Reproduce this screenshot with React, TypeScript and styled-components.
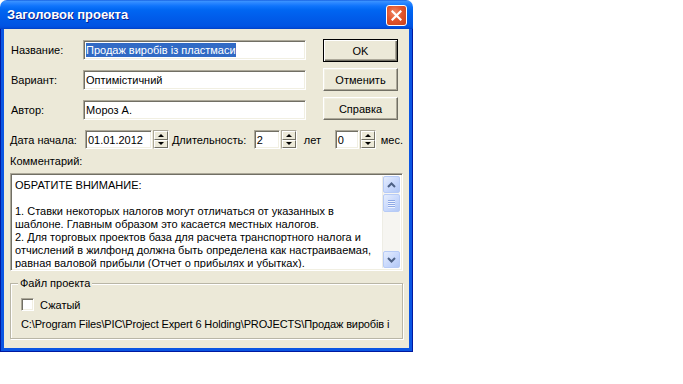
import React from 'react';
import styled, { createGlobalStyle, css } from 'styled-components';

const GlobalStyle = createGlobalStyle`
  html, body { margin: 0; padding: 0; background: #fff; }
  body {
    font-family: "Liberation Sans", Arial, sans-serif;
    font-size: 11px;
    color: #000;
  }
`;

const Window = styled.div`
  width: 413px;
  display: flex;
  flex-direction: column;
`;

const TitleBar = styled.div`
  height: 29px;
  box-sizing: border-box;
  padding: 0 6px 0 7px;
  border-radius: 7px 7px 0 0;
  display: flex;
  align-items: center;
  justify-content: space-between;
  background: linear-gradient(
    to bottom,
    #0a4fd8 0px,
    #3d95ff 1px,
    #2a86ff 3px,
    #0f74fc 6px,
    #0066f2 10px,
    #005eec 16px,
    #0058e6 22px,
    #0054e3 26px,
    #004ad8 28px,
    #003fbf 29px
  );
`;

const Title = styled.span`
  color: #fff;
  font-weight: bold;
  font-size: 13px;
  text-shadow: 1px 1px 0 #0a1e8c;
`;

const CloseBtn = styled.div`
  width: 21px;
  height: 21px;
  box-sizing: border-box;
  border: 1px solid #fff;
  border-radius: 3px;
  background: radial-gradient(circle at 40% 35%, #f08a68 0%, #e2552c 45%, #c8401a 100%);
  display: flex;
  align-items: center;
  justify-content: center;
  margin-top: 1px;
`;

const Frame = styled.div`
  background: #0a55e3;
  border: 1px solid #0019a0;
  border-top: none;
  padding: 0 3px 3px 3px;
`;

const Body = styled.div`
  background: #ece9d8;
  padding: 10px 6px 9px 6px;
  display: flex;
  flex-direction: column;
`;

const TopSection = styled.div`
  display: flex;
  align-items: flex-start;
`;

const FieldGrid = styled.div`
  display: grid;
  grid-template-columns: 72px 223px;
  grid-auto-rows: 20px;
  row-gap: 10px;
  margin: 1px 0 0 1px;
  align-items: center;
`;

const Label = styled.span`
  white-space: nowrap;
`;

const sunken = css`
  box-sizing: border-box;
  background: #fff;
  border-style: solid;
  border-width: 1px;
  border-color: #aca899 #fff #fff #aca899;
  box-shadow: inset 1px 1px 0 #716f64, inset -1px -1px 0 #f1efe2;
`;

const Edit = styled.div<{ $w?: number; $h?: number }>`
  ${sunken};
  width: ${p => (p.$w ? `${p.$w}px` : 'auto')};
  height: ${p => p.$h ?? 20}px;
  padding: 0 2px;
  display: flex;
  align-items: center;
  white-space: nowrap;
  overflow: hidden;
`;

const Selected = styled.span`
  background: #316ac5;
  color: #fff;
  line-height: 14px;
`;

const ButtonCol = styled.div`
  display: flex;
  flex-direction: column;
  gap: 6px;
  margin-left: 17px;
`;

const Btn = styled.div<{ $default?: boolean }>`
  box-sizing: border-box;
  width: 75px;
  height: 23px;
  display: flex;
  align-items: center;
  justify-content: center;
  background: #ece9d8;
  border: 1px solid;
  ${p =>
    p.$default
      ? css`
          border-color: #000;
          box-shadow: inset 1px 1px 0 #fff, inset -1px -1px 0 #716f64, inset -2px -2px 0 #aca899;
        `
      : css`
          border-color: #fff #716f64 #716f64 #fff;
          box-shadow: inset -1px -1px 0 #aca899, inset 1px 1px 0 #f1efe2;
        `}
`;

const DateRow = styled.div`
  display: flex;
  align-items: center;
  height: 19px;
  margin-top: 10px;
`;

const Caption = styled.span<{ $w?: number; $pad?: number }>`
  box-sizing: border-box;
  white-space: nowrap;
  width: ${p => (p.$w ? `${p.$w}px` : 'auto')};
  padding-left: ${p => p.$pad ?? 0}px;
`;

const Spin = styled.div`
  display: flex;
  height: 19px;
`;

const SpinBtns = styled.div`
  display: flex;
  flex-direction: column;
  width: 16px;
  margin-left: 1px;
  box-sizing: border-box;
  border: 1px solid;
  border-color: #aca899 #fff #fff #aca899;
`;

const SpinHalf = styled.div`
  flex: 1;
  box-sizing: border-box;
  background: #ece9d8;
  border: 1px solid;
  border-color: #fff #716f64 #716f64 #fff;
  display: flex;
  align-items: center;
  justify-content: center;
`;

const Arrow = styled.span<{ $up?: boolean }>`
  width: 0;
  height: 0;
  border-left: 3px solid transparent;
  border-right: 3px solid transparent;
  ${p => (p.$up ? 'border-bottom: 3px solid #000;' : 'border-top: 3px solid #000;')}
`;

const CommentLabel = styled.div`
  margin-top: 6px;
  line-height: 13px;
`;

const Memo = styled.div`
  ${sunken};
  margin-top: 5px;
  height: 98px;
  display: flex;
  padding: 2px;
`;

const MemoText = styled.div`
  flex: 1;
  padding: 3px 2px 0 2px;
  line-height: 13px;
  overflow: hidden;
  white-space: nowrap;
`;

const ScrollBar = styled.div`
  width: 17px;
  display: flex;
  flex-direction: column;
  background: #f6f5f1;
  border-left: 1px solid #eeede5;
`;

const ScrollBtn = styled.div`
  width: 17px;
  height: 17px;
  box-sizing: border-box;
  border: 1px solid #b7cbf6;
  border-radius: 2px;
  background: linear-gradient(135deg, #e5edfd 0%, #c8d8fc 55%, #b3c8f5 100%);
  display: flex;
  align-items: center;
  justify-content: center;
`;

const Thumb = styled(ScrollBtn)`
  height: 18px;
  margin-top: 1px;
  flex-direction: column;
  gap: 1px;
`;

const Grip = styled.span`
  width: 7px;
  height: 1px;
  background: #8ea8e5;
  box-shadow: 0 1px 0 #eef3fe;
`;

const Spacer = styled.div`
  flex: 1;
`;

const Group = styled.fieldset`
  margin: 6px 0 0 0;
  padding: 0 10px 7px 10px;
  border: 1px solid #b9b6a6;
  box-shadow: inset 1px 1px 0 #fff, 1px 1px 0 #fff;
  min-width: 0;
`;

const Legend = styled.legend`
  padding: 0 2px;
  margin-left: -3px;
  line-height: 13px;
  background: #ece9d8;
`;

const CheckRow = styled.div`
  display: flex;
  align-items: center;
  gap: 6px;
  margin-top: 8px;
  height: 13px;
`;

const CheckBox = styled.span`
  ${sunken};
  width: 13px;
  height: 13px;
`;

const PathLine = styled.div`
  margin-top: 7px;
  line-height: 13px;
  letter-spacing: -0.13px;
  white-space: nowrap;
  overflow: hidden;
`;

const SpinEdit = ({ value, w }: { value: string; w: number }) => (
  <Spin>
    <Edit $w={w} $h={19}>{value}</Edit>
    <SpinBtns>
      <SpinHalf><Arrow $up /></SpinHalf>
      <SpinHalf><Arrow /></SpinHalf>
    </SpinBtns>
  </Spin>
);

const Chevron = ({ up }: { up?: boolean }) => (
  <svg width="9" height="6" viewBox="0 0 9 6">
    <path
      d={up ? 'M1 5 L4.5 1.5 L8 5' : 'M1 1 L4.5 4.5 L8 1'}
      fill="none"
      stroke="#4d6185"
      strokeWidth="2"
    />
  </svg>
);

const memoLines = [
  'ОБРАТИТЕ ВНИМАНИЕ:',
  '\u00a0',
  '1. Ставки некоторых налогов могут отличаться от указанных в',
  'шаблоне. Главным образом это касается местных налогов.',
  '2. Для торговых проектов база для расчета транспортного налога и',
  'отчислений в жилфонд должна быть определена как настраиваемая,',
  'равная валовой прибыли (Отчет о прибылях и убытках).',
];

export default function App() {
  return (
    <>
      <GlobalStyle />
      <Window>
        <TitleBar>
          <Title>Заголовок проекта</Title>
          <CloseBtn>
            <svg width="11" height="11" viewBox="0 0 11 11">
              <path d="M1.5 1.5 L9.5 9.5 M9.5 1.5 L1.5 9.5" stroke="#fff" strokeWidth="2.2" strokeLinecap="square" />
            </svg>
          </CloseBtn>
        </TitleBar>
        <Frame>
          <Body>
            <TopSection>
              <FieldGrid>
                <Label>Название:</Label>
                <Edit><Selected>Продаж виробів із пластмаси</Selected></Edit>
                <Label>Вариант:</Label>
                <Edit>Оптимістичний</Edit>
                <Label>Автор:</Label>
                <Edit>Мороз А.</Edit>
              </FieldGrid>
              <ButtonCol>
                <Btn $default>OK</Btn>
                <Btn>Отменить</Btn>
                <Btn>Справка</Btn>
              </ButtonCol>
            </TopSection>

            <DateRow>
              <Caption $w={75}>Дата начала:</Caption>
              <SpinEdit value="01.01.2012" w={67} />
              <Caption $w={85} $pad={3}>Длительность:</Caption>
              <SpinEdit value="2" w={26} />
              <Caption $w={38} $pad={7}>лет</Caption>
              <SpinEdit value="0" w={24} />
              <Caption $pad={5}>мес.</Caption>
            </DateRow>

            <CommentLabel>Комментарий:</CommentLabel>
            <Memo>
              <MemoText>
                {memoLines.map((l, i) => (
                  <div key={i}>{l}</div>
                ))}
              </MemoText>
              <ScrollBar>
                <ScrollBtn><Chevron up /></ScrollBtn>
                <Thumb>
                  <Grip />
                  <Grip />
                  <Grip />
                  <Grip />
                </Thumb>
                <Spacer />
                <ScrollBtn><Chevron /></ScrollBtn>
              </ScrollBar>
            </Memo>

            <Group>
              <Legend>Файл проекта</Legend>
              <CheckRow>
                <CheckBox />
                <span>Сжатый</span>
              </CheckRow>
              <PathLine>C:\Program Files\PIC\Project Expert 6 Holding\PROJECTS\Продаж виробів і</PathLine>
            </Group>
          </Body>
        </Frame>
      </Window>
    </>
  );
}
